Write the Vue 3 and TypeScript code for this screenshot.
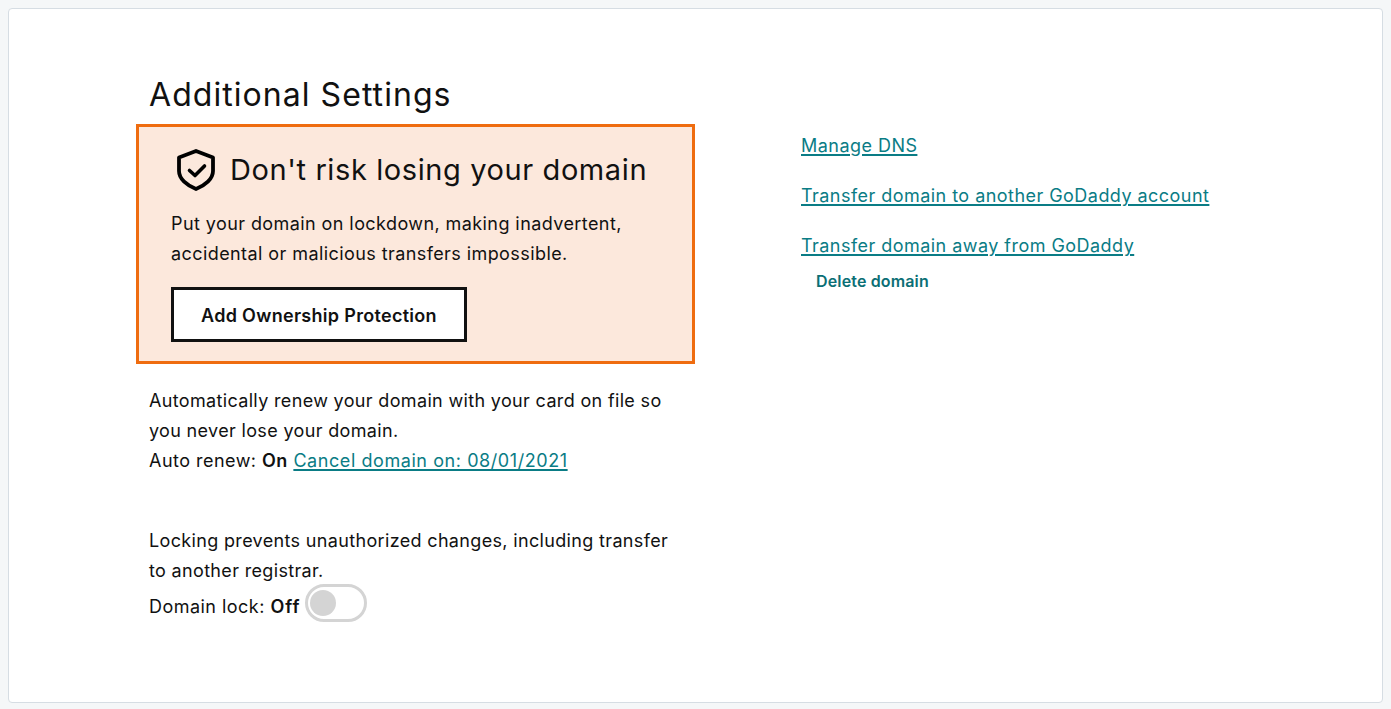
<script setup lang="ts">
const links: string[] = [
  'Manage DNS',
  'Transfer domain to another GoDaddy account',
  'Transfer domain away from GoDaddy',
]
</script>

<template>
  <div class="page">
    <main class="card">
      <section class="left">
        <h1 class="title">Additional Settings</h1>
        <div class="promo">
          <div class="promo-head">
            <svg class="shield" viewBox="0 0 38 42" width="38" height="42" fill="none" stroke="#000" stroke-linejoin="round" stroke-linecap="round">
              <path d="M19 2 L36 8.500 V22 C36 30 28 36.500 19 40 C10 36.500 2 30 2 22 V8.500 Z" stroke-width="3.800" />
              <path d="M12.500 21.500 L18 26.500 L27.500 17" stroke-width="3.600" />
            </svg>
            <h2 class="promo-title">Don't risk losing your domain</h2>
          </div>
          <p class="text tight">Put your domain on lockdown, making inadvertent, accidental or malicious transfers impossible.</p>
          <button class="cta" type="button"><span class="cta-label">Add Ownership Protection</span></button>
        </div>
        <div class="block renew">
          <p class="text tighter">Automatically renew your domain with your card on file so you never lose your domain.</p>
          <p class="text">Auto renew: <b>On</b> <a class="link wide" href="#">Cancel domain on: 08/01/2021</a></p>
        </div>
        <div class="block lock">
          <p class="text tighter">Locking prevents unauthorized changes, including transfer to another registrar.</p>
          <div class="lock-row">
            <span class="text">Domain lock: <b class="off">Off</b></span>
            <span class="toggle"><span class="knob"></span></span>
          </div>
        </div>
      </section>
      <aside class="right">
        <a v-for="l in links" :key="l" class="link side" href="#">{{ l }}</a>
        <a class="delete" href="#">Delete domain</a>
      </aside>
    </main>
  </div>
</template>

<style scoped>
.page {
  box-sizing: border-box;
  height: 709px;
  padding: 8px 8px 6px 8px;
  background: #f5f7f8;
  font-family: Inter, "Liberation Sans", sans-serif;
  color: #111111;
}
.card {
  box-sizing: border-box;
  height: 695px;
  background: #fff;
  border: 1px solid #d6dde3;
  border-radius: 4px;
  display: flex;
  padding: 64px 0 0 127px;
}
.left {
  width: 559px;
  flex: none;
}
.title {
  margin: 0 0 7px 13px;
  font-size: 32px;
  line-height: 44px;
  font-weight: 400;
  letter-spacing: 1.05px;
}
.promo {
  box-sizing: border-box;
  height: 240px;
  background: #fce8dc;
  border: 3px solid #ef6c0f;
  padding: 0 20px 0 32px;
}
.promo-head {
  display: flex;
  align-items: center;
  gap: 15px;
  height: 44px;
  margin: 21px 0 17px 6px;
}
.shield {
  flex: none;
  width: 38px;
  height: 42px;
}
.promo-title {
  margin: 0;
  font-size: 29px;
  line-height: 40px;
  font-weight: 400;
  letter-spacing: 0.6px;
  white-space: nowrap;
}
.text {
  margin: 0;
  font-size: 18px;
  line-height: 30px;
  letter-spacing: 0.47px;
}
.text.tight {
  letter-spacing: 0.42px;
}
.text.tighter {
  letter-spacing: 0.34px;
}
.promo .text {
  margin-bottom: 18px;
}
.cta {
  box-sizing: border-box;
  width: 296px;
  height: 55px;
  background: #fff;
  border: 3px solid #111;
  font: 600 18px Inter, "Liberation Sans", sans-serif;
  letter-spacing: 0.3px;
  color: #111;
  padding: 2px 0 0;
}
.block {
  padding-left: 13px;
  padding-right: 15px;
}
.renew {
  margin-top: 22px;
}
.lock {
  margin-top: 50px;
}
.lock-row {
  display: flex;
  align-items: center;
  gap: 5px;
  height: 42px;
}
b {
  font-weight: 600;
}
.off {
  letter-spacing: 1px;
}
.link {
  color: #0a7c85;
  text-decoration: underline;
  text-decoration-thickness: 1.5px;
  text-underline-offset: 2px;
}
.link.wide {
  letter-spacing: 0.57px;
}
.right {
  margin-left: 106px;
  padding-top: 58px;
  display: flex;
  flex-direction: column;
  align-items: flex-start;
}
.side {
  font-size: 18px;
  line-height: 30px;
  letter-spacing: 0.46px;
  margin-bottom: 20px;
}
.side:nth-child(3) {
  margin-bottom: 8px;
}
.delete {
  margin-left: 15px;
  font-size: 16px;
  line-height: 24px;
  font-weight: 600;
  letter-spacing: 0.15px;
  color: #0b6f75;
  text-decoration: none;
}
.toggle {
  box-sizing: border-box;
  width: 62px;
  height: 38px;
  margin-top: -8px;
  border: 3px solid #d4d4d4;
  border-radius: 19px;
  display: flex;
  align-items: center;
  padding-left: 2px;
  background: #fff;
}
.knob {
  width: 26px;
  height: 26px;
  border-radius: 50%;
  background: #d4d4d4;
}
</style>
